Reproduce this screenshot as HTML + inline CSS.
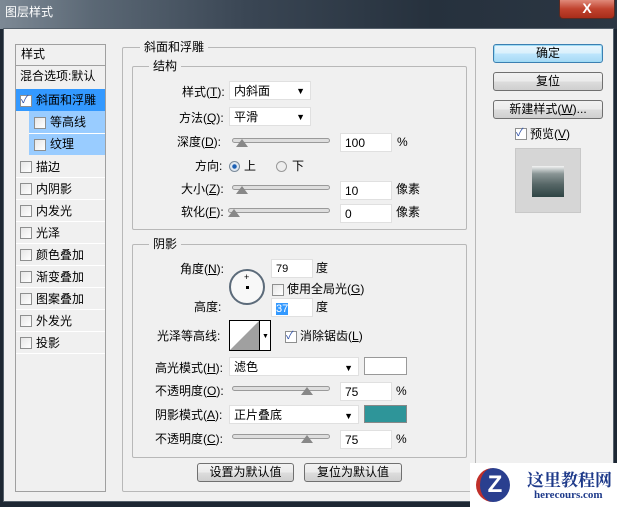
<!DOCTYPE html>
<html><head><meta charset="utf-8"><style>
*{margin:0;padding:0;box-sizing:border-box}
body{width:617px;height:507px;overflow:hidden;background:#1d2733;font-family:"Liberation Sans","Noto Sans CJK SC",sans-serif;font-size:12px;line-height:15px;color:#000;position:relative}
.a{position:absolute}
.title{left:0;top:0;width:617px;height:29px;background:linear-gradient(90deg,#7d8995 0%,#5b6875 15%,#3a4654 40%,#26313d 70%,#2b3643 100%)}
.body{left:3px;top:28px;width:611px;height:474px;background:#f0f0f0;border:1px solid #55606b}
.grp{border:1px solid #b8b8b8;border-radius:2px}
.lbl{background:#f0f0f0;padding:0 4px}
.inp{background:#fff;border:1px solid #e0e0e0;height:19px;padding-left:4px;line-height:18px}
.btn{border:1px solid #707070;border-radius:3px;background:linear-gradient(#f2f2f2,#ebebeb 50%,#dddddd 50%,#cfcfcf);text-align:center;line-height:16px;height:19px}
.cb{width:12px;height:12px;border:1px solid #8e8f8f;background:linear-gradient(135deg,#e6e6e6,#fff)}
.row{left:16px;width:89px;height:22px;line-height:22px;border-bottom:1px solid #fff}
.slider{height:5px;border:1px solid #9a9a9a;border-radius:3px;background:#dedede}
.thumb{width:0;height:0;border-left:6px solid transparent;border-right:6px solid transparent;border-bottom:8px solid #888}
.dd{font-size:9px}
</style></head><body>
<div class="a title"></div>
<div class="a" style="left:5px;top:5px;color:#fff;font-size:12px">图层样式</div>
<div class="a" style="left:559px;top:0;width:56px;height:19px;background:linear-gradient(#e08a7a,#c0422e 50%,#a82d1a);border:1px solid #5a2a22;border-top:none;border-radius:0 0 4px 4px;color:#fff;text-align:center;font-weight:bold;font-size:14px;line-height:17px">X</div>
<div class="a body"></div>

<!-- left list -->
<div class="a" style="left:15px;top:44px;width:91px;height:448px;border:1px solid #a0a0a0;background:#f0f0f0"></div>
<div class="a" style="left:21px;top:46px;line-height:16px">样式</div>
<div class="a" style="left:16px;top:65px;width:89px;border-top:1px solid #a0a0a0"></div>
<div class="a" style="left:20px;top:67px;line-height:18px">混合选项:默认</div>
<div class="a" style="left:16px;top:89px;width:89px;height:22px;background:#3399ff"></div>
<div class="a cb" style="left:20px;top:95px;background:#fff"></div><div class="a" style="left:21px;top:93px;color:#3355aa;font-size:11px">✓</div>
<div class="a" style="left:36px;top:89px;line-height:22px">斜面和浮雕</div>
<div class="a" style="left:29px;top:111px;width:76px;height:44px;background:#99ccff"></div>
<div class="a" style="left:29px;top:133px;width:76px;border-top:1px solid #fff"></div>
<div class="a cb" style="left:34px;top:117px"></div><div class="a" style="left:50px;top:111px;line-height:22px">等高线</div>
<div class="a cb" style="left:34px;top:139px"></div><div class="a" style="left:50px;top:133px;line-height:22px">纹理</div>
<div class="a row" style="top:156px"><span class="a cb" style="left:4px;top:5px"></span><span style="padding-left:20px">描边</span></div>
<div class="a row" style="top:178px"><span class="a cb" style="left:4px;top:5px"></span><span style="padding-left:20px">内阴影</span></div>
<div class="a row" style="top:200px"><span class="a cb" style="left:4px;top:5px"></span><span style="padding-left:20px">内发光</span></div>
<div class="a row" style="top:222px"><span class="a cb" style="left:4px;top:5px"></span><span style="padding-left:20px">光泽</span></div>
<div class="a row" style="top:244px"><span class="a cb" style="left:4px;top:5px"></span><span style="padding-left:20px">颜色叠加</span></div>
<div class="a row" style="top:266px"><span class="a cb" style="left:4px;top:5px"></span><span style="padding-left:20px">渐变叠加</span></div>
<div class="a row" style="top:288px"><span class="a cb" style="left:4px;top:5px"></span><span style="padding-left:20px">图案叠加</span></div>
<div class="a row" style="top:310px"><span class="a cb" style="left:4px;top:5px"></span><span style="padding-left:20px">外发光</span></div>
<div class="a row" style="top:332px"><span class="a cb" style="left:4px;top:5px"></span><span style="padding-left:20px">投影</span></div>

<!-- main groups -->
<div class="a grp" style="left:122px;top:47px;width:354px;height:445px"></div>
<div class="a lbl" style="left:140px;top:40px">斜面和浮雕</div>
<div class="a grp" style="left:132px;top:66px;width:335px;height:164px"></div>
<div class="a lbl" style="left:149px;top:59px">结构</div>

<div class="a" style="left:182px;top:85px">样式(<u>T</u>):</div>
<div class="a inp" style="left:229px;top:81px;width:82px">内斜面<span class="a dd" style="right:5px;top:0">▼</span></div>
<div class="a" style="left:179px;top:111px">方法(<u>Q</u>):</div>
<div class="a inp" style="left:229px;top:107px;width:82px">平滑<span class="a dd" style="right:5px;top:0">▼</span></div>
<div class="a" style="left:177px;top:135px">深度(<u>D</u>):</div>
<div class="a slider" style="left:232px;top:138px;width:98px"></div><div class="a thumb" style="left:236px;top:139px"></div>
<div class="a inp" style="left:340px;top:133px;width:52px">100</div><div class="a" style="left:397px;top:135px">%</div>
<div class="a" style="left:195px;top:159px">方向:</div>
<div class="a" style="left:229px;top:161px;width:11px;height:11px;border-radius:50%;border:1px solid #7a8a99;background:radial-gradient(#1a5fb4 30%,#dfe8f2 40%)"></div>
<div class="a" style="left:244px;top:159px">上</div>
<div class="a" style="left:276px;top:161px;width:11px;height:11px;border-radius:50%;border:1px solid #999;background:#eee"></div>
<div class="a" style="left:292px;top:159px">下</div>
<div class="a" style="left:181px;top:182px">大小(<u>Z</u>):</div>
<div class="a slider" style="left:232px;top:185px;width:98px"></div><div class="a thumb" style="left:236px;top:186px"></div>
<div class="a inp" style="left:340px;top:181px;width:52px">10</div><div class="a" style="left:396px;top:182px">像素</div>
<div class="a" style="left:181px;top:205px">软化(<u>F</u>):</div>
<div class="a slider" style="left:228px;top:208px;width:102px"></div><div class="a thumb" style="left:228px;top:209px"></div>
<div class="a inp" style="left:340px;top:204px;width:52px">0</div><div class="a" style="left:396px;top:205px">像素</div>

<div class="a grp" style="left:132px;top:244px;width:335px;height:214px"></div>
<div class="a lbl" style="left:149px;top:237px">阴影</div>
<div class="a" style="left:180px;top:262px">角度(<u>N</u>):</div>
<div class="a" style="left:229px;top:269px;width:36px;height:36px;border-radius:50%;border:2px solid #5c6b7a;background:#f8f8f8"></div>
<div class="a" style="left:244px;top:270px;font-size:9px">+</div>
<div class="a" style="left:246px;top:286px;width:3px;height:3px;background:#000"></div>
<div class="a inp" style="left:271px;top:259px;width:42px;font-size:11px">79</div><div class="a" style="left:316px;top:261px">度</div>
<div class="a cb" style="left:272px;top:284px"></div><div class="a" style="left:287px;top:282px">使用全局光(<u>G</u>)</div>
<div class="a" style="left:194px;top:300px">高度:</div>
<div class="a inp" style="left:271px;top:298px;width:42px"><span style="background:#3399ff;color:#fff;font-size:11px">37</span></div><div class="a" style="left:316px;top:300px">度</div>
<div class="a" style="left:157px;top:329px">光泽等高线:</div>
<div class="a" style="left:229px;top:320px;width:42px;height:31px;border:1px solid #000;background:#fff"></div>
<svg class="a" style="left:230px;top:321px" width="29" height="29"><polygon points="0,29 29,0 29,29" fill="#a0a0a0"/></svg>
<div class="a" style="left:259px;top:321px;width:1px;height:29px;background:#000"></div>
<div class="a" style="left:262px;top:329px;font-size:7px">▼</div>
<div class="a cb" style="left:285px;top:331px;background:#fff"></div><div class="a" style="left:286px;top:329px;color:#3355aa;font-size:11px">✓</div>
<div class="a" style="left:300px;top:329px">消除锯齿(<u>L</u>)</div>
<div class="a" style="left:155px;top:361px">高光模式(<u>H</u>):</div>
<div class="a inp" style="left:229px;top:357px;width:130px">滤色<span class="a dd" style="right:5px;top:1px">▼</span></div>
<div class="a" style="left:364px;top:357px;width:43px;height:18px;border:1px solid #999;background:#fff"></div>
<div class="a" style="left:155px;top:384px">不透明度(<u>O</u>):</div>
<div class="a slider" style="left:232px;top:386px;width:98px"></div><div class="a thumb" style="left:301px;top:387px"></div>
<div class="a inp" style="left:340px;top:382px;width:52px">75</div><div class="a" style="left:396px;top:384px">%</div>
<div class="a" style="left:155px;top:408px">阴影模式(<u>A</u>):</div>
<div class="a inp" style="left:229px;top:405px;width:130px">正片叠底<span class="a dd" style="right:5px;top:1px">▼</span></div>
<div class="a" style="left:364px;top:405px;width:43px;height:18px;border:1px solid #888;background:#2e9599"></div>
<div class="a" style="left:155px;top:432px">不透明度(<u>C</u>):</div>
<div class="a slider" style="left:232px;top:434px;width:98px"></div><div class="a thumb" style="left:301px;top:435px"></div>
<div class="a inp" style="left:340px;top:430px;width:52px">75</div><div class="a" style="left:396px;top:432px">%</div>

<div class="a btn" style="left:197px;top:463px;width:97px">设置为默认值</div>
<div class="a btn" style="left:304px;top:463px;width:98px">复位为默认值</div>

<!-- right -->
<div class="a btn" style="left:493px;top:44px;width:110px;border-color:#3c7fb1;box-shadow:0 0 0 1px #9fdcf5 inset;background:linear-gradient(#eaf6fd,#d9f0fc 50%,#bee6fd 50%,#a7d9f5)">确定</div>
<div class="a btn" style="left:493px;top:72px;width:110px">复位</div>
<div class="a btn" style="left:493px;top:100px;width:110px">新建样式(<u>W</u>)...</div>
<div class="a cb" style="left:515px;top:128px;background:#fff"></div><div class="a" style="left:516px;top:126px;color:#3355aa;font-size:11px">✓</div>
<div class="a" style="left:530px;top:127px">预览(<u>V</u>)</div>
<div class="a" style="left:515px;top:148px;width:66px;height:65px;background:#d6d6d6;border:1px solid #c8c8c8"></div>
<div class="a" style="left:532px;top:166px;width:32px;height:31px;background:linear-gradient(#f4f4f4 0%,#8a9696 25%,#566666 60%,#2e4444 100%)"></div>

<!-- watermark -->
<div class="a" style="left:470px;top:463px;width:147px;height:44px;background:#fff"></div>
<div class="a" style="left:476px;top:468px;width:34px;height:34px;border-radius:50%;background:#2a3f8f;color:#fff;font-weight:bold;font-size:24px;text-align:center;line-height:34px;border-left:4px solid #c0302a">Z</div>
<div class="a" style="left:527px;top:469px;color:#1e3a8a;font-weight:bold;font-size:17px;line-height:20px;font-family:'Noto Serif CJK SC',serif">这里教程网</div>
<div class="a" style="left:534px;top:488px;color:#1e3a8a;font-weight:bold;font-size:11px;font-family:'Liberation Serif',serif">herecours.com</div>
</body></html>
